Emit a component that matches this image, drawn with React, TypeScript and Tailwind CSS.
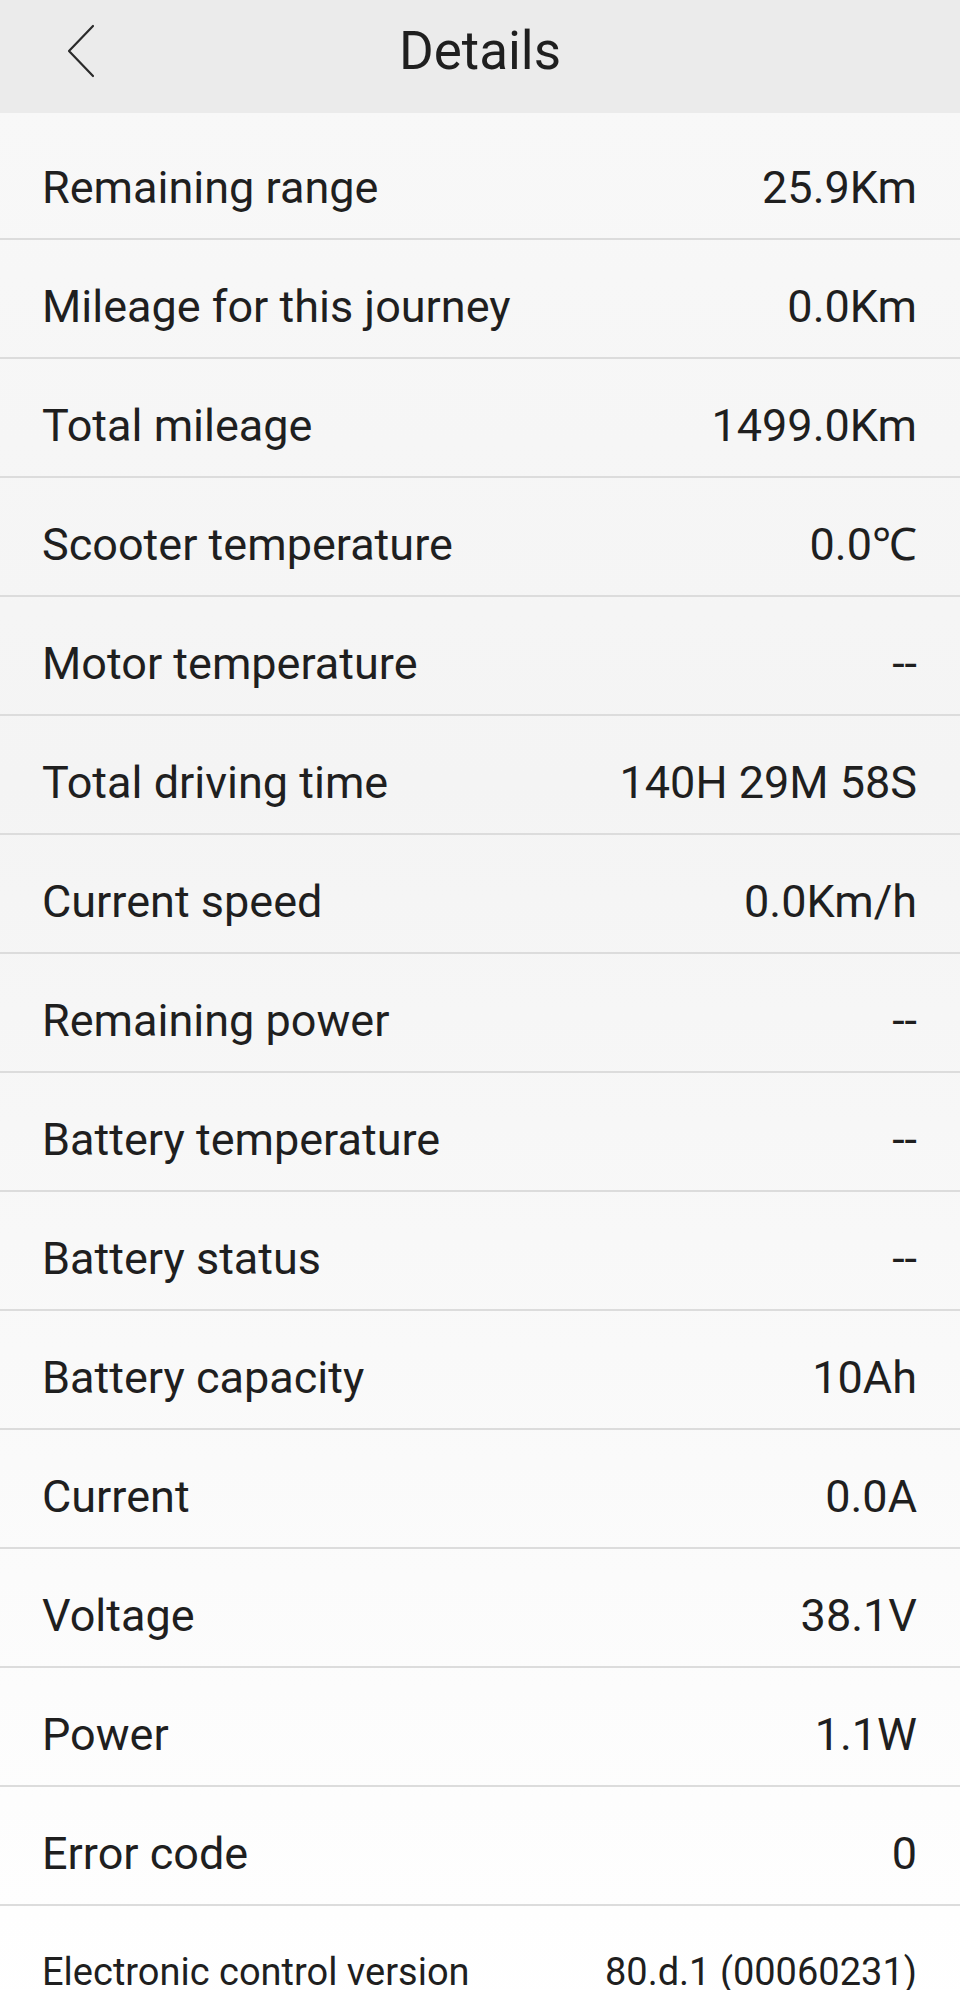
const rows: { label: string; value: string }[] = [
  { label: 'Remaining range', value: '25.9Km' },
  { label: 'Mileage for this journey', value: '0.0Km' },
  { label: 'Total mileage', value: '1499.0Km' },
  { label: 'Scooter temperature', value: '0.0℃' },
  { label: 'Motor temperature', value: '--' },
  { label: 'Total driving time', value: '140H 29M 58S' },
  { label: 'Current speed', value: '0.0Km/h' },
  { label: 'Remaining power', value: '--' },
  { label: 'Battery temperature', value: '--' },
  { label: 'Battery status', value: '--' },
  { label: 'Battery capacity', value: '10Ah' },
  { label: 'Current', value: '0.0A' },
  { label: 'Voltage', value: '38.1V' },
  { label: 'Power', value: '1.1W' },
  { label: 'Error code', value: '0' },
];

const BackIcon = () => (
  <svg width="34" height="56" viewBox="0 0 34 56" fill="none">
    <path d="M27 3 L3 28 L27 53" stroke="#2a2a2a" strokeWidth="2.2" strokeLinecap="round" strokeLinejoin="round" />
  </svg>
);

export default function App() {
  return (
    <div className="h-screen overflow-hidden bg-white text-[#1f1f1f] font-['Roboto','Liberation_Sans',sans-serif]">
      {/* Header */}
      <div className="grid grid-cols-[1fr_auto_1fr] items-center h-[113px] bg-[#ebebeb] pb-[11px]">
        <div className="pl-[66px] flex items-center">
          <BackIcon />
        </div>
        <h1 className="text-[53px] leading-none font-normal">Details</h1>
        <div />
      </div>

      {/* List */}
      <div className="pt-[8px] bg-linear-to-b from-[#f8f8f8] via-[#f4f4f4] via-35% to-white">
        {rows.map((r) => (
          <div
            key={r.label}
            className="flex items-center justify-between h-[119px] border-b-2 border-[#dcdcdc] pl-[42px] pr-[43px] pt-[16px] text-[45px] leading-none"
          >
            <span>{r.label}</span>
            <span>{r.value}</span>
          </div>
        ))}
        <div className="flex items-center justify-between h-[119px] pl-[42px] pr-[43px] pt-[13px] text-[38px] leading-none">
          <span>Electronic control version</span>
          <span>80.d.1 (00060231)</span>
        </div>
      </div>
    </div>
  );
}
